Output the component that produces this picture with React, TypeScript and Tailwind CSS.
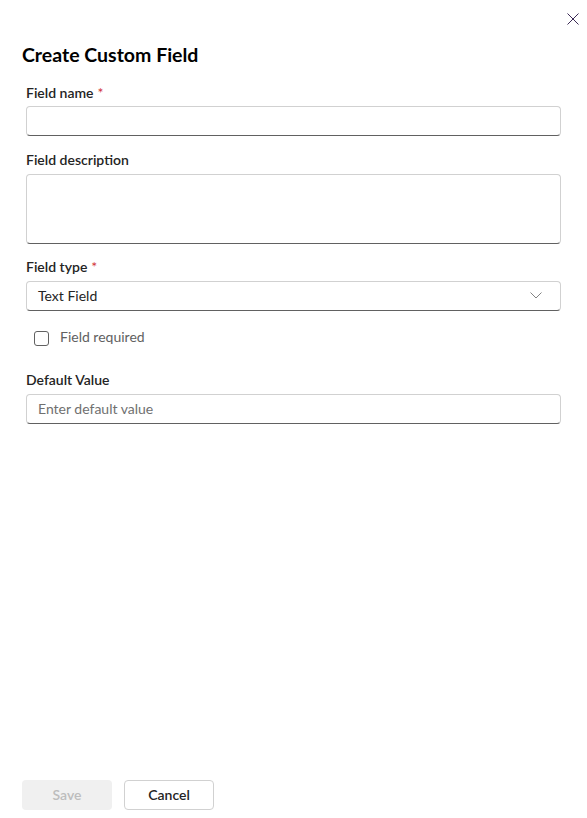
import React from 'react';

const FONT = 'font-["Lato","Noto_Sans",sans-serif]';

function Label({ text, required }: { text: string; required?: boolean }) {
  return (
    <label className="block h-5 text-[14px] leading-5 font-semibold text-[#242424]">
      {text}
      {required && <span className="ml-1 font-normal text-[#d13438]">*</span>}
    </label>
  );
}

const fieldBox =
  'w-full rounded-[4px] border border-[#d1d1d1] border-b-[#616161] bg-white px-[11px] text-[14px] text-[#242424] outline-none placeholder:text-[#707070]';

export default function App() {
  return (
    <div className={`relative flex h-[818px] w-full flex-col bg-white px-[22px] pt-[41px] ${FONT}`}>
      {/* close */}
      <button className="absolute right-[8px] top-[13px] flex h-3 w-3 items-center justify-center text-[#3b2a55]">
        <svg width="12" height="12" viewBox="0 0 12 12" fill="none">
          <path d="M0.5 0.5L11.5 11.5M11.5 0.5L0.5 11.5" stroke="currentColor" strokeWidth="1" />
        </svg>
      </button>

      <h1 className="h-7 text-[19.5px] leading-7 font-bold text-black">Create Custom Field</h1>

      <div className="ml-1 mr-[4px] flex flex-col">
        <div className="mt-[14px]">
          <Label text="Field name" required />
          <input className={`${fieldBox} mt-[3px] h-[30px]`} />
        </div>

        <div className="mt-[14px]">
          <Label text="Field description" />
          <textarea className={`${fieldBox} mt-[4px] block h-[70px] resize-none py-1`} />
        </div>

        <div className="mt-[13px]">
          <Label text="Field type" required />
          <div className={`${fieldBox} mt-[4px] flex h-[30px] items-center justify-between pb-[2px]`}>
            <span>Text Field</span>
            <svg width="12" height="7" viewBox="0 0 12 7" fill="none" className="mr-[7px]">
              <path d="M0.5 0.5L6 6L11.5 0.5" stroke="#757575" strokeWidth="0.9" />
            </svg>
          </div>
        </div>

        <label className="ml-2 mt-[19px] flex h-4 items-center gap-[11px]">
          <span className="h-[15px] w-[15px] rounded-[3px] border border-[#616161] bg-white" />
          <span className="-mt-[3px] text-[14px] text-[#616161]">Field required</span>
        </label>

        <div className="mt-[24px]">
          <Label text="Default Value" />
          <input className={`${fieldBox} mt-[4px] h-[30px] pb-[2px]`} placeholder="Enter default value" />
        </div>
      </div>

      <div className="mt-auto flex gap-3 pb-2">
        <button
          disabled
          className="h-[30px] w-[90px] rounded-[4px] bg-[#f0f0f0] pb-[2px] text-[14px] font-semibold text-[#bdbdbd]"
        >
          Save
        </button>
        <button className="h-[30px] w-[90px] rounded-[4px] border border-[#d1d1d1] bg-white pb-[2px] text-[14px] font-semibold text-[#242424]">
          Cancel
        </button>
      </div>
    </div>
  );
}
